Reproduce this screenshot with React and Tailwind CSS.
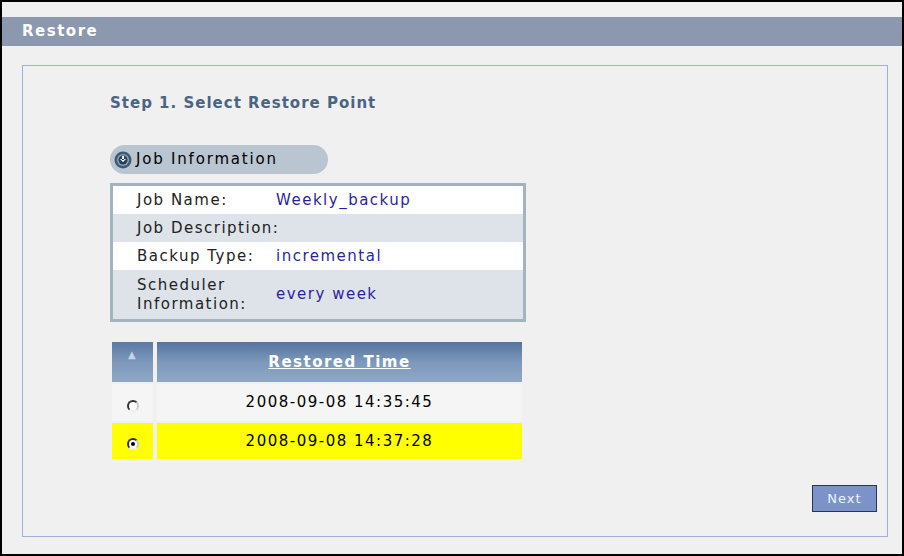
export default function App() {
  const f = { fontFamily: '"DejaVu Sans", Verdana, sans-serif' };
  return (
    <div className="w-[904px] h-[556px] border-2 border-black bg-[#f0f0f0] flex flex-col" style={f}>
      <div className="h-[15px]" />
      <div className="h-[29px] bg-[#8b98ae] flex items-center px-[20px] text-white font-bold text-[15px] tracking-[1.5px]">Restore</div>
      <div className="flex-1 pl-[20px] pr-[14px] pt-[19px] pb-[17px] flex">
        <div className="flex-1 border border-[#9fb0d4] flex flex-col pl-[87px] pr-[10px] pt-[26px] pb-[24px]">
          <div className="text-[#4a6484] font-bold text-[15px] tracking-[1px] h-[20px]">Step 1. Select Restore Point</div>
          <div className="mt-[33px] w-[218px] h-[29px] rounded-full bg-[#b9c5d0] flex items-center pl-[4px] gap-[4px] text-[15px] tracking-[1.8px] text-black">
            <svg width="18" height="18" viewBox="0 0 18 18"><circle cx="9" cy="9" r="8.5" fill="#3d5a78"/><circle cx="9" cy="9" r="6" fill="#8ca3bb"/><circle cx="9" cy="9" r="4.5" fill="#24405c"/><path d="M6 8 L9 11 L12 8 Z M8 5h2v4H8z" fill="#fff"/></svg>
            <span>Job Information</span>
          </div>
          <div className="mt-[9px] w-[416px] border-[3px] border-[#a3b4c1] text-[15px] tracking-[1.5px]">
            {[["Job Name:", "Weekly_backup", "bg-white"], ["Job Description:", "", "bg-[#dde3e9]"], ["Backup Type:", "incremental", "bg-white"]].map(([a, b, c]) => (
              <div key={a} className={`flex h-[28px] items-center ${c}`}>
                <div className="w-[163px] pl-[24px] text-[#222] whitespace-nowrap">{a}</div>
                <div className="text-[#2d1f9c]">{b}</div>
              </div>
            ))}
            <div className="flex h-[49px] items-center bg-[#dde3e9]">
              <div className="w-[163px] pl-[24px] text-[#222] leading-[19px]">Scheduler<br />Information:</div>
              <div className="text-[#2d1f9c]">every week</div>
            </div>
          </div>
          <div className="mt-[20px] ml-[2px] w-[410px] text-[15px] tracking-[1.5px]">
            <div className="flex h-[40px] gap-[4px]">
              <div className="w-[41px] bg-gradient-to-b from-[#5a7aa4] via-[#7d98bb] to-[#90a8c6] flex justify-center pt-[5px]"><span className="text-[#c6d4e6] text-[10px]">▲</span></div>
              <div className="flex-1 bg-gradient-to-b from-[#54749e] via-[#7d98bb] to-[#90a8c6] flex items-center justify-center text-white font-bold underline text-[15px]">Restored Time</div>
            </div>
            <div className="flex h-[37px] gap-[4px] mt-[2px]">
              <div className="w-[41px] bg-[#f5f5f5] flex items-center justify-center"><span className="w-[12px] h-[12px] rounded-full border-2 border-[#333] border-r-[#ccc] border-b-[#eee] bg-white mt-[6px]"/></div>
              <div className="flex-1 bg-[#f5f5f5] flex items-center justify-center">2008-09-08 14:35:45</div>
            </div>
            <div className="flex h-[36px] gap-[4px] mt-[2px]">
              <div className="w-[41px] bg-[#ffff00] flex items-center justify-center"><span className="w-[12px] h-[12px] rounded-full border-2 border-[#333] border-r-[#ccc] border-b-[#eee] bg-white mt-[6px] flex items-center justify-center"><span className="w-[4px] h-[4px] rounded-full bg-black"/></span></div>
              <div className="flex-1 bg-[#ffff00] flex items-center justify-center">2008-09-08 14:37:28</div>
            </div>
          </div>
          <div className="flex-1" />
          <div className="flex justify-end">
            <div className="w-[65px] h-[27px] bg-[#7b93c8] border border-[#2a3550] text-[#eef2fa] text-[13px] tracking-[1px] flex items-center justify-center">Next</div>
          </div>
        </div>
      </div>
    </div>
  );
}
